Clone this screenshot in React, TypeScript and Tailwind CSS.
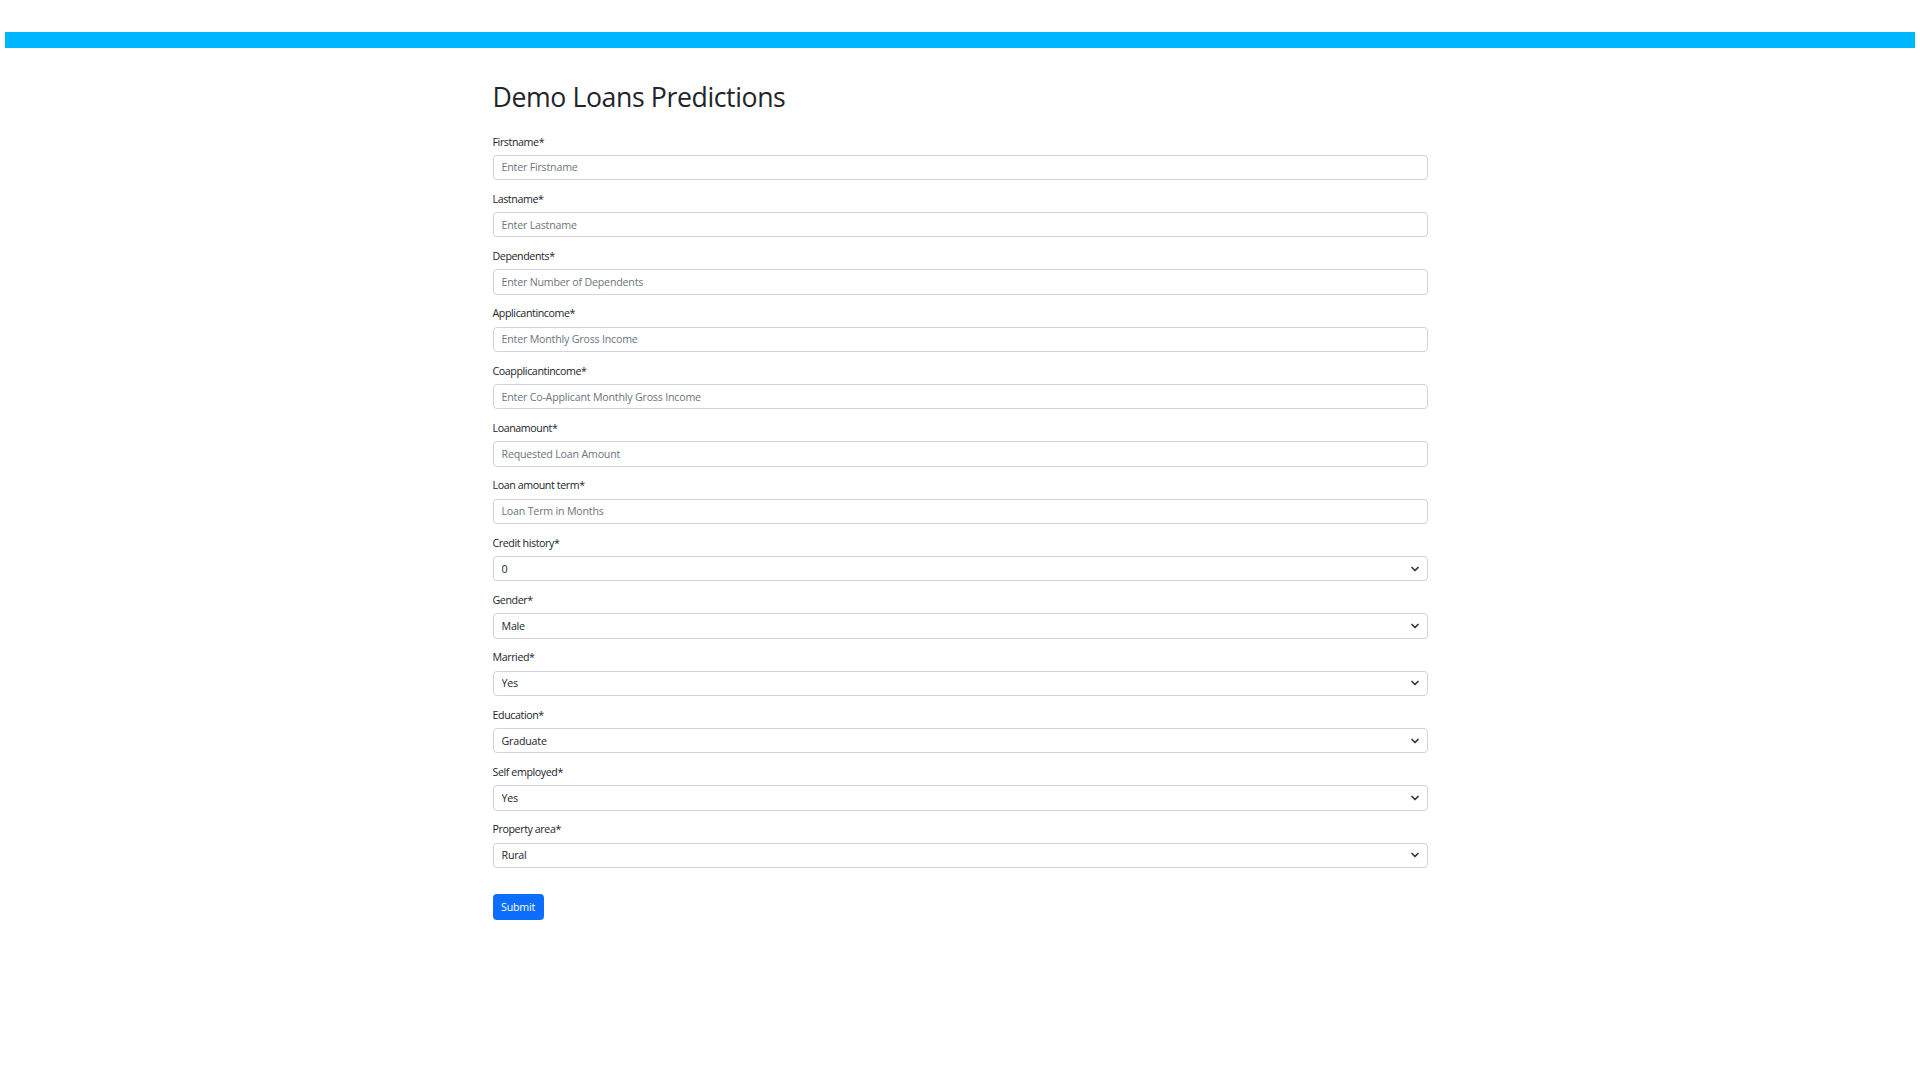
import { ChevronDown } from "lucide-react";

type Field = {
  label: string;
  placeholder?: string;
  options?: string[];
};

const fields: Field[] = [
  { label: "Firstname*", placeholder: "Enter Firstname" },
  { label: "Lastname*", placeholder: "Enter Lastname" },
  { label: "Dependents*", placeholder: "Enter Number of Dependents" },
  { label: "Applicantincome*", placeholder: "Enter Monthly Gross Income" },
  { label: "Coapplicantincome*", placeholder: "Enter Co-Applicant Monthly Gross Income" },
  { label: "Loanamount*", placeholder: "Requested Loan Amount" },
  { label: "Loan amount term*", placeholder: "Loan Term in Months" },
  { label: "Credit history*", options: ["0", "1"] },
  { label: "Gender*", options: ["Male", "Female"] },
  { label: "Married*", options: ["Yes", "No"] },
  { label: "Education*", options: ["Graduate", "Not Graduate"] },
  { label: "Self employed*", options: ["Yes", "No"] },
  { label: "Property area*", options: ["Rural", "Semiurban", "Urban"] },
];

const controlClass =
  "block w-full h-[25.33px] rounded-[4px] border border-[#ced4da] bg-white px-[8px] text-[10.67px] leading-[16px] tracking-[-0.2px] text-[#212529] outline-none placeholder:text-[#6c757d]";

export default function App() {
  return (
    <div className="min-h-screen bg-white font-['Segoe_UI','Open_Sans',sans-serif] text-[#212529]">
      <div className="mx-[5px] pt-[32px]">
        <div className="h-[16px] bg-[#00b7ff]" />
      </div>

      <div className="mx-auto w-[935px] pt-[33px]">
        <h1 className="mb-[20.5px] text-[26.67px] font-medium leading-[32px] tracking-[-0.4px]">
          Demo Loans Predictions
        </h1>

        <form onSubmit={(e) => e.preventDefault()}>
          {fields.map((f) => (
            <div key={f.label} className="mb-[10.67px]">
              <label className="mb-[5.33px] block text-[10.67px] leading-[16px] tracking-[-0.4px]">{f.label}</label>
              {f.options ? (
                <div className="relative">
                  <select defaultValue={f.options[0]} className={`${controlClass} appearance-none pr-[24px]`}>
                    {f.options.map((o) => (
                      <option key={o}>{o}</option>
                    ))}
                  </select>
                  <ChevronDown
                    className="pointer-events-none absolute right-[7px] top-1/2 h-[12px] w-[12px] -translate-y-1/2 text-[#343a40]"
                    strokeWidth={3.5}
                  />
                </div>
              ) : (
                <input type="text" placeholder={f.placeholder} className={controlClass} />
              )}
            </div>
          ))}

          <button
            type="submit"
            className="mt-[15.5px] h-[26px] rounded-[4px] bg-[#0d6efd] px-[8.5px] text-[10.67px] leading-[16px] tracking-[-0.2px] text-white"
          >
            Submit
          </button>
        </form>
      </div>
    </div>
  );
}
